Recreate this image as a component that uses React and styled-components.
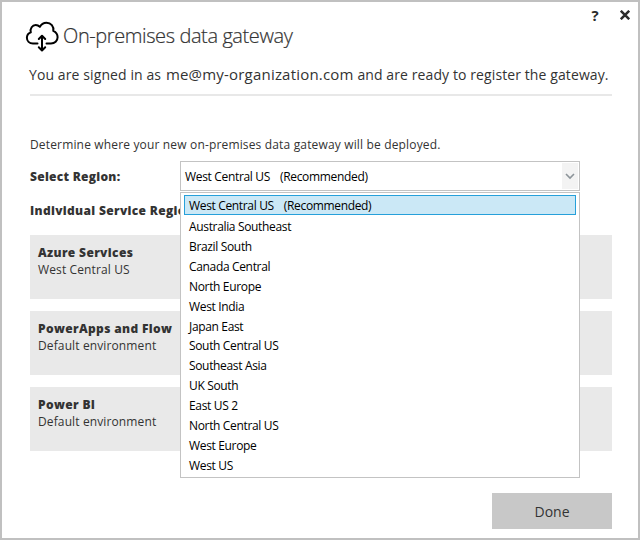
import React from "react";
import styled, { createGlobalStyle } from "styled-components";

const GlobalStyle = createGlobalStyle`
  * { box-sizing: border-box; }
  body { margin: 0; background: #fff; }
`;

const Window = styled.main`
  width: 640px;
  height: 540px;
  padding: 5px 26px 9px 28px;
  border: 2px solid #c0c0c0;
  background: #fff;
  color: #333;
  font-family: "Open Sans", "Noto Sans", sans-serif;
  display: flex;
  flex-direction: column;
  overflow: hidden;
  white-space: nowrap;
`;

const TitleBar = styled.div`
  height: 14px;
  flex: none;
  margin-right: -18px;
  padding-top: 2px;
  display: flex;
  justify-content: flex-end;
  align-items: center;
  gap: 20px;
`;

const WindowButton = styled.button`
  width: 10px;
  height: 16px;
  padding: 0;
  border: 0;
  background: none;
  color: #2b2b2b;
  font: 700 15px/16px "Open Sans", sans-serif;
  display: flex;
  align-items: center;
  justify-content: center;
`;

const Header = styled.header`
  height: 34px;
  flex: none;
  margin-left: -5px;
  display: flex;
  align-items: flex-start;
  gap: 4px;
`;

const Title = styled.h1`
  margin: 0;
  font-size: 20px;
  font-weight: 300;
  line-height: 30px;
  letter-spacing: -0.4px;
  -webkit-text-stroke: 0.2px #333;
`;

const SignedIn = styled.p`
  margin: 6px 0 0 -1px;
  height: 33px;
  flex: none;
  font-size: 14px;
  line-height: 28px;
  letter-spacing: 0.1px;
`;

const Account = styled.span`
  margin-left: 1px;
  font-size: 15px;
  line-height: 20px;
  letter-spacing: 0.2px;
`;

const Divider = styled.hr`
  width: 100%;
  height: 2px;
  flex: none;
  margin: 0;
  border: 0;
  background: #e8e8e8;
`;

const Intro = styled.p`
  margin: 39px 0 0;
  height: 20px;
  flex: none;
  font-size: 12px;
  line-height: 20px;
  letter-spacing: 0.16px;
`;

const RegionRow = styled.div`
  position: relative;
  height: 30px;
  flex: none;
  margin-top: 6px;
  display: grid;
  grid-template-columns: 150px 400px;
  align-items: center;
`;

const Label = styled.div`
  padding-top: 1px;
  font-size: 12px;
  font-weight: 800;
  line-height: 20px;
  letter-spacing: 0.27px;
`;

const Select = styled.div`
  height: 30px;
  padding: 1px 1px 1px 4px;
  border: 1px solid #c3c3c3;
  background: #fff;
  color: #000;
  font-size: 12px;
  letter-spacing: -0.33px;
  display: flex;
  justify-content: space-between;
  align-items: center;
`;

const Chevron = styled.span`
  width: 16px;
  height: 26px;
  background: #f3f3f3;
  display: flex;
  align-items: center;
  justify-content: center;
`;

const Note = styled.span`
  margin-left: 10px;
`;

const Menu = styled.ul`
  position: absolute;
  z-index: 1;
  top: 31px;
  left: 150px;
  width: 400px;
  height: 286px;
  margin: 0;
  padding: 2px 3px;
  border: 1px solid #c3c3c3;
  background: #fff;
  color: #000;
  list-style: none;
`;

const Option = styled.li`
  height: 19.93px;
  padding: ${(p) => (p.$selected ? "0" : "1px")} 0 0 4px;
  border: 1px solid ${(p) => (p.$selected ? "#26a0da" : "transparent")};
  background: ${(p) => (p.$selected ? "#cbe8f6" : "transparent")};
  font-size: 12px;
  line-height: 19px;
  letter-spacing: -0.34px;
`;

const ServicesLabel = styled(Label)`
  width: 150px;
  overflow: hidden;
  margin-top: 9px;
  height: 20px;
  flex: none;
  letter-spacing: 0.33px;
`;

const Cards = styled.div`
  margin-top: 15px;
  display: grid;
  grid-auto-rows: 64px;
  gap: 12px;
`;

const Card = styled.section`
  padding: 9px 8px;
  background: #e9e9e9;
  font-size: 12px;
  line-height: 16px;
  letter-spacing: 0.12px;
`;

const CardTitle = styled.div`
  font-weight: 800;
  line-height: 18px;
  letter-spacing: 0.35px;
`;

const DoneButton = styled.button`
  width: 120px;
  height: 36px;
  flex: none;
  margin-top: auto;
  align-self: flex-end;
  padding: 1px 0 0;
  border: 0;
  background: #c8c8c8;
  color: #333;
  font: 400 14px/36px "Open Sans", sans-serif;
`;

const regions = [
  { name: "West Central US", selected: true },
  { name: "Australia Southeast" },
  { name: "Brazil South" },
  { name: "Canada Central" },
  { name: "North Europe" },
  { name: "West India" },
  { name: "Japan East" },
  { name: "South Central US" },
  { name: "Southeast Asia" },
  { name: "UK South" },
  { name: "East US 2" },
  { name: "North Central US" },
  { name: "West Europe" },
  { name: "West US" },
];

const services = [
  { name: "Azure Services", value: "West Central US" },
  { name: "PowerApps and Flow", value: "Default environment" },
  { name: "Power BI", value: "Default environment" },
];

const CloudIcon = () => (
  <svg width="34" height="32" viewBox="0 0 34 32" fill="none" stroke="#000" strokeWidth="2" strokeLinecap="round" strokeLinejoin="round">
    <path d="M12.500 22.500H8C4.300 22.500 1.900 20 1.900 16.800C1.900 14.100 3.400 12.200 5.800 11.400C4.900 7.300 7.300 4.100 10.700 4.100C12.300 4.100 13.700 4.700 14.900 5.900C16.200 3.100 18.500 1.700 21.500 1.700C26 1.700 29 5.200 28.300 9.900C31 11.200 32.600 13.500 32.600 16.300C32.600 19.900 29.700 22.500 26 22.500H21.500" />
    <path d="M17 15V29M13.800 18L17 14.800L20.200 18M13.800 26.300L17 29.500L20.200 26.300" />
  </svg>
);

const CloseIcon = () => (
  <svg width="10" height="10" viewBox="0 0 10 10" fill="none" stroke="#2b2b2b" strokeWidth="2.500">
    <path d="M0.800 0.800L9.200 9.200M9.200 0.800L0.800 9.200" />
  </svg>
);

const ChevronIcon = () => (
  <svg width="10" height="7" viewBox="0 0 10 7" fill="none" stroke="#8c9499" strokeWidth="1.600">
    <path d="M1 1L5 5L9 1" />
  </svg>
);

export default function App() {
  return (
    <Window>
      <GlobalStyle />
      <TitleBar>
        <WindowButton aria-label="Help">?</WindowButton>
        <WindowButton aria-label="Close"><CloseIcon /></WindowButton>
      </TitleBar>
      <Header>
        <CloudIcon />
        <Title>On-premises data gateway</Title>
      </Header>
      <SignedIn>
        You are signed in as <Account>me@my-organization.com</Account> and are ready to register the gateway.
      </SignedIn>
      <Divider />
      <Intro>Determine where your new on-premises data gateway will be deployed.</Intro>
      <RegionRow>
        <Label>Select Region:</Label>
        <Select>
          <span>West Central US<Note>(Recommended)</Note></span>
          <Chevron><ChevronIcon /></Chevron>
        </Select>
        <Menu>
          {regions.map((r) => (
            <Option key={r.name} $selected={r.selected}>
              {r.name}
              {r.selected && <Note>(Recommended)</Note>}
            </Option>
          ))}
        </Menu>
      </RegionRow>
      <ServicesLabel>Individual Service Regions:</ServicesLabel>
      <Cards>
        {services.map((s) => (
          <Card key={s.name}>
            <CardTitle>{s.name}</CardTitle>
            <div>{s.value}</div>
          </Card>
        ))}
      </Cards>
      <DoneButton>Done</DoneButton>
    </Window>
  );
}
